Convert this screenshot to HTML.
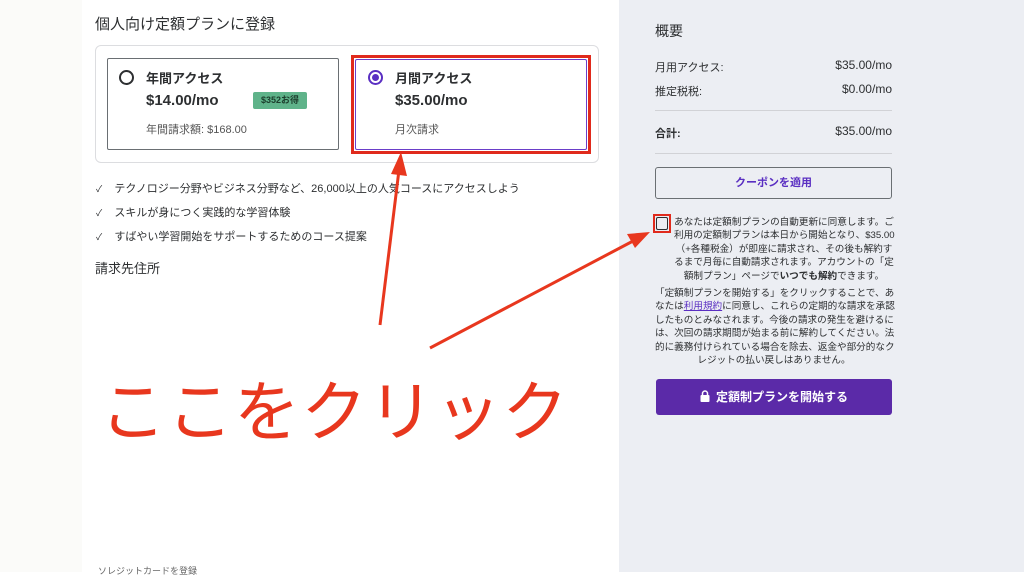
<!DOCTYPE html><html><head><meta charset="utf-8"><style>
*{margin:0;padding:0;box-sizing:border-box}
body{width:1024px;height:572px;position:relative;overflow:hidden;background:#fff;font-family:"Liberation Sans","Noto Sans CJK JP",sans-serif;color:#2d2f31}
.a{position:absolute;white-space:nowrap}
.right{position:absolute;left:619px;top:0;width:405px;height:572px;background:#eceef3}
.leftstrip{position:absolute;left:0;top:0;width:82px;height:572px;background:#fbfbf9}
.p{position:absolute;font-size:9.6px;text-align:center;white-space:nowrap}
.p div{height:13.4px;line-height:13.4px}
</style></head><body>
<div class="leftstrip"></div>
<div class="right"></div>
<div class="a" style="left:95px;top:13px;font-size:15px">個人向け定額プランに登録</div>
<div class="a" style="left:95px;top:45px;width:504px;height:118px;border:1px solid #dcdde0;border-radius:6px"></div>
<div class="a" style="left:107px;top:58px;width:232px;height:92px;border:1px solid #6a6f73;border-radius:2px"></div>
<div class="a" style="left:119px;top:70px;width:15px;height:15px;border:2px solid #2d2f31;border-radius:50%"></div>
<div class="a" style="left:146px;top:68px;font-size:13px;font-weight:bold">年間アクセス</div>
<div class="a" style="left:146px;top:92px;font-size:15px;font-weight:bold">$14.00/mo</div>
<div class="a" style="left:253px;top:92px;width:54px;height:17px;background:#5fb38a;border-radius:2px;font-size:9px;font-weight:bold;text-align:center;line-height:17px;color:#1c3d2c">$352お得</div>
<div class="a" style="left:146px;top:121px;font-size:11px;color:#555">年間請求額: $168.00</div>
<div class="a" style="left:351px;top:55px;width:240px;height:99px;border:3px solid #e02a1c"></div>
<div class="a" style="left:355px;top:59px;width:232px;height:91px;border:1px solid #6a3ec9;border-radius:2px"></div>
<div class="a" style="left:368px;top:70px;width:15px;height:15px;border:2px solid #5a2fc2;border-radius:50%"><div style="position:absolute;left:2px;top:2px;width:7px;height:7px;border-radius:50%;background:#5a2fc2"></div></div>
<div class="a" style="left:395px;top:68px;font-size:13px;font-weight:bold">月間アクセス</div>
<div class="a" style="left:395px;top:92px;font-size:15px;font-weight:bold">$35.00/mo</div>
<div class="a" style="left:395px;top:121px;font-size:11px;color:#555">月次請求</div>
<div class="a" style="left:96px;top:177px;font-size:11px;line-height:24px"><span style="font-size:9px">✓</span>&nbsp;&nbsp;&nbsp;&nbsp;テクノロジー分野やビジネス分野など、26,000以上の人気コースにアクセスしよう<br><span style="font-size:9px">✓</span>&nbsp;&nbsp;&nbsp;&nbsp;スキルが身につく実践的な学習体験<br><span style="font-size:9px">✓</span>&nbsp;&nbsp;&nbsp;&nbsp;すばやい学習開始をサポートするためのコース提案</div>
<div class="a" style="left:95px;top:258px;font-size:13px">請求先住所</div>
<div class="a" style="left:100px;top:359px;font-size:66px;color:#e8371e;letter-spacing:1px">ここをクリック</div>
<svg class="a" style="left:0;top:0" width="1024" height="572"><g stroke="#e8371e" stroke-width="3" fill="#e8371e"><line x1="380" y1="325" x2="399" y2="170"/><polygon points="401,152 391,174 407,176" stroke="none"/><line x1="430" y1="348" x2="635" y2="240"/><polygon points="650,232 627,234 635,248" stroke="none"/></g></svg>
<div class="a" style="left:655px;top:21px;font-size:14px">概要</div>
<div class="a" style="left:655px;top:59px;font-size:11px">月用アクセス:</div>
<div class="a" style="left:655px;top:83px;font-size:11px">推定税税:</div>
<div class="a" style="right:132px;top:58px;font-size:12px">$35.00/mo</div>
<div class="a" style="right:132px;top:82px;font-size:12px">$0.00/mo</div>
<div class="a" style="left:655px;top:110px;width:237px;border-top:1px solid #d1d2d6"></div>
<div class="a" style="left:655px;top:125px;font-size:11px;font-weight:bold">合計:</div>
<div class="a" style="right:132px;top:124px;font-size:12px">$35.00/mo</div>
<div class="a" style="left:655px;top:153px;width:237px;border-top:1px solid #d1d2d6"></div>
<div class="a" style="left:655px;top:167px;width:237px;height:32px;border:1px solid #6a6f73;border-radius:3px;text-align:center;line-height:30px;font-size:11px;font-weight:bold;color:#5a2fc2">クーポンを適用</div>
<div class="a" style="left:653px;top:214px;width:18px;height:19px;border:2px solid #e02a1c"></div>
<div class="a" style="left:656px;top:217px;width:12px;height:13px;border:1.5px solid #2d2f31;border-radius:2px"></div>
<div class="p" style="left:674px;top:216px;width:220px">
<div>あなたは定額制プランの自動更新に同意します。ご</div>
<div>利用の定額制プランは本日から開始となり、$35.00</div>
<div>（+各種税金）が即座に請求され、その後も解約す</div>
<div>るまで月毎に自動請求されます。アカウントの「定</div>
<div>額制プラン」ページで<b>いつでも解約</b>できます。</div>
</div>
<div class="p" style="left:655px;top:287px;width:238px">
<div>「定額制プランを開始する」をクリックすることで、あ</div>
<div>なたは<span style="color:#5a2fc2;text-decoration:underline">利用規約</span>に同意し、これらの定期的な請求を承認</div>
<div>したものとみなされます。今後の請求の発生を避けるに</div>
<div>は、次回の請求期間が始まる前に解約してください。法</div>
<div>的に義務付けられている場合を除去、返金や部分的なク</div>
<div>レジットの払い戻しはありません。</div>
</div>
<div class="a" style="left:656px;top:379px;width:236px;height:36px;background:#5b2aa8;border-radius:3px;color:#fff;font-size:12px;font-weight:bold;text-align:center;line-height:36px"><svg width="10" height="12" viewBox="0 0 10 12" style="vertical-align:-1px;margin-right:6px"><path d="M2.5 5V3.5a2.5 2.5 0 0 1 5 0V5" stroke="#fff" stroke-width="1.5" fill="none"/><rect x="0.5" y="5" width="9" height="7" rx="1" fill="#fff"/></svg>定額制プランを開始する</div>
<div class="a" style="left:98px;top:564px;font-size:9px;color:#666">ソレジットカードを登録</div>
</body></html>
